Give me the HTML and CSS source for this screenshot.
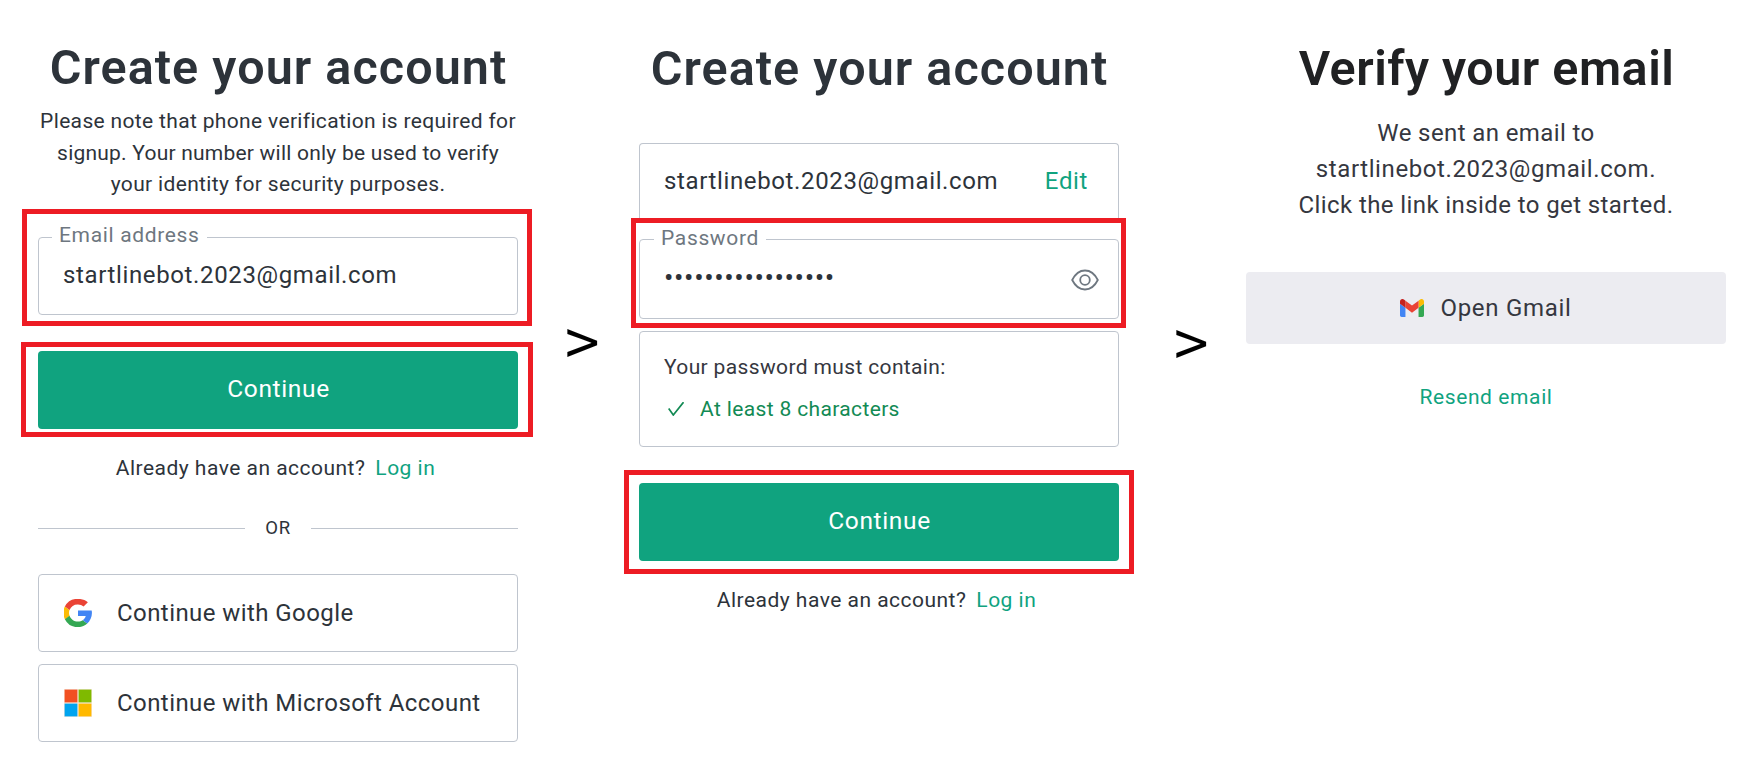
FILE: index.html
```
<!DOCTYPE html>
<html lang="en">
<head>
<meta charset="utf-8">
<title>Create your account</title>
<link rel="stylesheet" href="styles.css">
</head>
<body>
<main class="steps">
  <section class="step step-email">
    <h1 class="title">Create your account</h1>
    <p class="note">Please note that phone verification is required for<br><span class="note-2">signup. Your number will only be used to verify</span><br>your identity for security purposes.</p>
    <div class="marked email-wrap">
      <div class="field">
        <span class="label">Email address</span>
        <span class="value">startlinebot.2023@gmail.com</span>
      </div>
      <i class="mark mark-email"></i>
    </div>
    <div class="marked button-wrap">
      <div class="primary">Continue</div>
      <i class="mark mark-continue"></i>
    </div>
    <p class="login"><span>Already have an account?</span><a class="link">Log in</a></p>
    <div class="divider"><span>OR</span></div>
    <div class="social">
      <svg class="social-icon" viewBox="3 3 42 42">
        <path fill="#fbbc05" d="M10.5 24c0-1.5.3-3 .7-4.4l-7-5.4A21 21 0 0 0 2.300 24c0 3.500.8 6.900 2.200 9.800l7-5.400c-.6-1.400-1-2.900-1-4.400z"/>
        <path fill="#ea4335" d="M24 11.200c3.200 0 6.100 1.100 8.400 3l6.400-6.300C34.900 4.600 29.900 2.800 24 2.800A21.500 21.500 0 0 0 4.300 14.200l7 5.400A13.300 13.300 0 0 1 24 11.200z"/>
        <path fill="#34a853" d="M24 36.800c-5.900 0-10.900-3.700-12.700-8.800l-7 5.500A21.500 21.500 0 0 0 24 45.200c5.200 0 10.200-1.800 13.900-5.300l-6.700-5.200c-1.900 1.300-4.300 2.100-7.200 2.100z"/>
        <path fill="#4285f4" d="M44.500 20.200H24v8.400h11.600c-.6 2.700-2.100 4.700-4.400 6.100l6.700 5.200c4.200-3.900 7-9.700 7-15.900 0-1.300-.1-2.600-.4-3.800z"/>
      </svg>
      <span>Continue with Google</span>
    </div>
    <div class="social">
      <svg class="social-icon" viewBox="0 0 28 28">
        <path fill="#f7e8dc" d="M0 0h28v28H0z"/>
        <path fill="#f25022" d="M.6.600h12.800v12.800H.6z"/>
        <path fill="#7fba00" d="M14.600.600h12.800v12.800H14.600z"/>
        <path fill="#00a4ef" d="M.6 14.600h12.800v12.800H.6z"/>
        <path fill="#ffb900" d="M14.600 14.600h12.800v12.800H14.600z"/>
      </svg>
      <span>Continue with Microsoft Account</span>
    </div>
  </section>

  <div class="next next-1">&gt;</div>

  <section class="step step-password">
    <h1 class="title">Create your account</h1>
    <div class="account">
      <span>startlinebot.2023@gmail.com</span>
      <a class="link edit">Edit</a>
    </div>
    <div class="marked password-wrap">
      <div class="field password">
        <span class="label">Password</span>
        <span class="dots">•••••••••••••••••</span>
        <svg class="eye" viewBox="0 0 28 22" fill="none" stroke="#6e7780" stroke-width="1.800">
          <path d="M1.200 11C4.200 5 8.600 1.500 14 1.500S23.800 5 26.800 11C23.800 17 19.400 20.500 14 20.500S4.200 17 1.200 11z"/>
          <circle cx="14" cy="11" r="4.800"/>
        </svg>
      </div>
      <i class="mark mark-password"></i>
    </div>
    <div class="rules">
      <p>Your password must contain:</p>
      <p class="rule">
        <svg class="check" viewBox="0 0 16 14" fill="none" stroke="#128a54" stroke-width="1.700"><path d="M.7 6.500 5.300 13 15.500.2"/></svg>
        <span>At least 8 characters</span>
      </p>
    </div>
    <div class="marked button-wrap">
      <div class="primary">Continue</div>
      <i class="mark mark-finish"></i>
    </div>
    <p class="login"><span>Already have an account?</span><a class="link">Log in</a></p>
  </section>

  <div class="next next-2">&gt;</div>

  <section class="step step-verify">
    <h1 class="title">Verify your email</h1>
    <p class="sent">We sent an email to<br><span class="address">startlinebot.2023@gmail.com.</span><br>Click the link inside to get started.</p>
    <div class="gmail">
      <svg class="gmail-icon" viewBox="52 42 88 66">
        <path fill="#4285f4" d="M58 108h14V74L52 59v43c0 3.320 2.690 6 6 6"/>
        <path fill="#34a853" d="M120 108h14c3.320 0 6-2.690 6-6V59l-20 15"/>
        <path fill="#fbbc04" d="M120 48v26l20-15v-8c0-7.420-8.470-11.650-14.400-7.200"/>
        <path fill="#ea4335" d="M72 74V48l24 18 24-18v26L96 92"/>
        <path fill="#c5221f" d="M52 51v8l20 15V48l-5.600-4.200c-5.940-4.450-14.400-.22-14.400 7.200"/>
      </svg>
      <span>Open Gmail</span>
    </div>
    <a class="link resend">Resend email</a>
  </section>
</main>
</body>
</html>
```
FILE: styles.css
```
* { box-sizing: border-box; }

body {
  margin: 0;
  background: #fff;
  color: #2d333a;
  font-family: Roboto, "Liberation Sans", sans-serif;
  font-size: 21px;
  line-height: 24px;
}

h1, p { margin: 0; }

.steps {
  display: flex;
  align-items: flex-start;
  width: 1748px;
  height: 760px;
  padding-left: 38px;
  overflow: hidden;
}

.step {
  display: flex;
  flex-direction: column;
  flex: none;
  width: 480px;
  padding-top: 41px;
}
.step-email { padding-top: 40px; }

.title {
  padding-left: 1px;
  font-size: 48.500px;
  line-height: 56px;
  font-weight: 600;
  letter-spacing: 1.050px;
  text-align: center;
  white-space: nowrap;
}
.step-verify .title { color: #202123; letter-spacing: .5px; }

.note {
  height: 95px;
  margin-top: 10px;
  line-height: 31.500px;
  letter-spacing: .34px;
  text-align: center;
  white-space: nowrap;
}
.note-2 { letter-spacing: .22px; }

.marked { position: relative; }
.mark {
  position: absolute;
  border: 5px solid #ed1c24;
}
.mark-email { inset: -28px -14px -11px -16px; }
.mark-continue { inset: -9px -15px -8px -17px; }
.mark-password { inset: -21px -7px -9px -8px; }
.mark-finish { inset: -13px -15px; }

.email-wrap { margin-top: 36px; }
.password-wrap { margin-top: 21px; }
.button-wrap { margin-top: 36px; }

.field {
  position: relative;
  height: 78px;
  padding: 21px 24px 0;
  border: 1px solid #bfc5ce;
  border-radius: 4px;
  font-size: 24px;
  line-height: 32px;
}
.label {
  position: absolute;
  top: -15px;
  left: 13px;
  padding: 0 7px 0 7px;
  background: #fff;
  color: #6e7780;
  font-size: 21px;
  line-height: 24px;
  letter-spacing: .66px;
}
.value { display: block; letter-spacing: .63px; }

.password {
  display: flex;
  justify-content: space-between;
  height: 80px;
  padding: 23px 19px 0 24px;
}
.password .label { top: -14px; left: 14px; }
.dots { font-size: 28px; line-height: 29px; letter-spacing: .6px; }
.eye { width: 28px; height: 22px; margin-top: 6px; }

.primary {
  display: flex;
  align-items: center;
  justify-content: center;
  height: 78px;
  padding: 0 0 2px 1px;
  border-radius: 4px;
  background: #10a37f;
  color: #fff;
  font-size: 24.500px;
  letter-spacing: .65px;
}

.login {
  display: flex;
  justify-content: center;
  gap: 10px;
  margin-top: 27px;
  padding-right: 5px;
  letter-spacing: .48px;
}
.link { color: #10a37f; }

.divider {
  display: flex;
  align-items: center;
  margin: 36px 0 34px;
  font-size: 18.500px;
}
.divider span { width: 66px; text-align: center; letter-spacing: .7px; }
.divider::before, .divider::after {
  content: "";
  flex: 1;
  height: 1px;
  background: #bfc5ce;
}

.social {
  display: flex;
  align-items: center;
  gap: 25px;
  height: 78px;
  padding-left: 25px;
  border: 1px solid #bfc5ce;
  border-radius: 4px;
  font-size: 24px;
  letter-spacing: .43px;
}
.social + .social { margin-top: 12px; }
.social-icon { width: 28px; height: 28px; }

.next {
  flex: none;
  color: #000;
  font: 62px/60px "Noto Sans CJK JP", sans-serif;
}
.next-1 { width: 121px; padding: 309px 0 0 47px; }
.next-2 { width: 127px; padding: 310px 0 0 55px; }

.account {
  display: flex;
  justify-content: space-between;
  height: 75px;
  margin-top: 46px;
  padding: 21px 30px 0 24px;
  border: 1px solid #bfc5ce;
  border-bottom: 0;
  border-radius: 4px 4px 0 0;
  font-size: 24px;
  line-height: 32px;
  letter-spacing: .63px;
}

.rules {
  height: 116px;
  margin-top: 12px;
  padding: 23px 24px 0;
  border: 1px solid #bfc5ce;
  border-radius: 4px;
  color: #353740;
  letter-spacing: .36px;
}
.rule {
  display: flex;
  align-items: center;
  gap: 16px;
  margin-top: 18px;
  padding-left: 4px;
  color: #128a54;
}
.check { width: 16px; height: 14px; }

.sent {
  margin-top: 18px;
  color: #353740;
  font-size: 24px;
  line-height: 36px;
  letter-spacing: .4px;
  text-align: center;
  white-space: nowrap;
}
.address { letter-spacing: .6px; }

.gmail {
  display: flex;
  align-items: center;
  justify-content: center;
  gap: 16px;
  height: 72px;
  margin-top: 49px;
  border-radius: 4px;
  background: #ececf1;
  color: #353740;
  font-size: 24px;
  letter-spacing: .7px;
}
.gmail-icon { width: 24px; height: 18px; }

.resend {
  margin-top: 41px;
  text-align: center;
  letter-spacing: .6px;
}
```
